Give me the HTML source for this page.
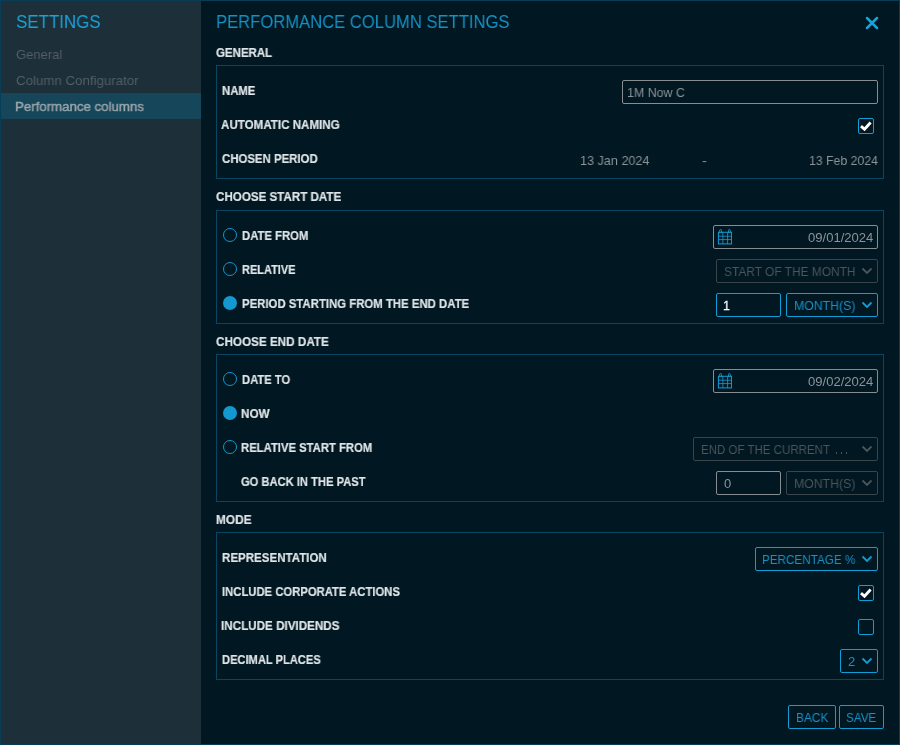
<!DOCTYPE html>
<html><head><meta charset="utf-8"><style>
html,body{margin:0;padding:0;width:900px;height:745px;overflow:hidden;background:#011721}
.t{position:absolute;will-change:transform;font-family:"Liberation Sans",sans-serif;white-space:nowrap;transform-origin:0 0}
.b{position:absolute}
</style></head><body>
<div style="position:absolute;left:0;top:0;width:898px;height:743px;border:1px solid #083e55;background:#011721"></div><div style="position:absolute;left:1px;top:1px;width:200px;height:743px;background:#1d2f38"></div><div style="position:absolute;left:1px;top:93px;width:200px;height:26px;background:#16465a"></div><div class="b" style="left:216px;top:65px;width:666px;height:112px;border:1px solid #094662;border-radius:0px;"></div><div class="b" style="left:216px;top:210px;width:666px;height:112px;border:1px solid #094662;border-radius:0px;"></div><div class="b" style="left:216px;top:354px;width:666px;height:146px;border:1px solid #094662;border-radius:0px;"></div><div class="b" style="left:216px;top:532px;width:666px;height:146px;border:1px solid #094662;border-radius:0px;"></div><div class="b" style="left:622px;top:80px;width:254px;height:22px;border:1px solid #878d90;border-radius:2px;"></div><div class="b" style="left:713px;top:225px;width:163px;height:22px;border:1px solid #878d90;border-radius:2px;"></div><div class="b" style="left:716px;top:259px;width:160px;height:22px;border:1px solid #3a454b;border-radius:2px;"></div><div class="b" style="left:716px;top:293px;width:63px;height:22px;border:1px solid #0f9ed6;border-radius:2px;"></div><div class="b" style="left:786px;top:293px;width:90px;height:22px;border:1px solid #0f9ed6;border-radius:2px;"></div><div class="b" style="left:713px;top:369px;width:163px;height:22px;border:1px solid #878d90;border-radius:2px;"></div><div class="b" style="left:693px;top:437px;width:183px;height:22px;border:1px solid #3a454b;border-radius:2px;"></div><div class="b" style="left:716px;top:471px;width:63px;height:22px;border:1px solid #878d90;border-radius:2px;"></div><div class="b" style="left:786px;top:471px;width:90px;height:22px;border:1px solid #3a454b;border-radius:2px;"></div><div class="b" style="left:755px;top:547px;width:121px;height:22px;border:1px solid #0f9ed6;border-radius:2px;"></div><div class="b" style="left:840px;top:649px;width:36px;height:22px;border:1px solid #0f9ed6;border-radius:2px;"></div><div class="b" style="left:788px;top:705px;width:46px;height:22px;border:1px solid #0f9ed6;border-radius:2px;"></div><div class="b" style="left:839px;top:705px;width:43px;height:22px;border:1px solid #0f9ed6;border-radius:2px;"></div><div class="b" style="left:835.5px;top:452px;width:1.8px;height:1.9px;background:#4b565b"></div><div class="b" style="left:840.5px;top:452px;width:1.8px;height:1.9px;background:#4b565b"></div><div class="b" style="left:845.5px;top:452px;width:1.8px;height:1.9px;background:#4b565b"></div><div class="b" style="left:858px;top:118px;width:14px;height:14px;border:1px solid #0f9ed6;border-radius:2px;"></div><div class="b" style="left:858px;top:585px;width:14px;height:14px;border:1px solid #0f9ed6;border-radius:2px;"></div><div class="b" style="left:858px;top:619px;width:14px;height:14px;border:1px solid #0f9ed6;border-radius:2px;"></div><div class="b" style="left:223px;top:228px;width:12px;height:12px;border-radius:50%;border:1px solid #1398d0"></div><div class="b" style="left:223px;top:262px;width:12px;height:12px;border-radius:50%;border:1px solid #1398d0"></div><div class="b" style="left:223px;top:296px;width:14px;height:14px;border-radius:50%;background:#1398d0"></div><div class="b" style="left:223px;top:372px;width:12px;height:12px;border-radius:50%;border:1px solid #1398d0"></div><div class="b" style="left:223px;top:406px;width:14px;height:14px;border-radius:50%;background:#1398d0"></div><div class="b" style="left:223px;top:440px;width:12px;height:12px;border-radius:50%;border:1px solid #1398d0"></div>
<svg class="b" style="left:860px;top:11px" width="24" height="24"><path d="M7 7 L17 17 M17 7 L7 17" stroke="#1aa3d9" stroke-width="2.5" stroke-linecap="round"/></svg><svg class="b" style="left:858px;top:118px" width="16" height="16"><path d="M3 8.1 L6.5 11.3 L12.6 4.5" stroke="#fff" stroke-width="2.8" fill="none" stroke-linecap="butt" stroke-linejoin="miter"/></svg><svg class="b" style="left:858px;top:585px" width="16" height="16"><path d="M3 8.1 L6.5 11.3 L12.6 4.5" stroke="#fff" stroke-width="2.8" fill="none" stroke-linecap="butt" stroke-linejoin="miter"/></svg><svg class="b" style="left:861px;top:266px" width="12" height="10"><path d="M1.5 2.5 L6 7 L10.5 2.5" stroke="#4b565b" stroke-width="1.8" fill="none"/></svg><svg class="b" style="left:861px;top:300px" width="12" height="10"><path d="M1.5 2.5 L6 7 L10.5 2.5" stroke="#0f9ed6" stroke-width="1.8" fill="none"/></svg><svg class="b" style="left:861px;top:444px" width="12" height="10"><path d="M1.5 2.5 L6 7 L10.5 2.5" stroke="#4b565b" stroke-width="1.8" fill="none"/></svg><svg class="b" style="left:861px;top:478px" width="12" height="10"><path d="M1.5 2.5 L6 7 L10.5 2.5" stroke="#4b565b" stroke-width="1.8" fill="none"/></svg><svg class="b" style="left:861px;top:554px" width="12" height="10"><path d="M1.5 2.5 L6 7 L10.5 2.5" stroke="#0f9ed6" stroke-width="1.8" fill="none"/></svg><svg class="b" style="left:861px;top:656px" width="12" height="10"><path d="M1.5 2.5 L6 7 L10.5 2.5" stroke="#0f9ed6" stroke-width="1.8" fill="none"/></svg><svg class="b" style="left:717px;top:228px" width="17" height="18"><g stroke="#1592c8" fill="none"><rect x="1.5" y="4.3" width="13" height="11.6" stroke-width="1.1"/><path d="M1.5 8.2 H14.5 M1.5 11.6 H14.5 M5.85 4.5 V16 M10.6 4.5 V16" stroke-width="0.9"/><path d="M2.7 5.2 V2.4 a0.9 0.9 0 0 1 1.8 0 V5.2 M11.5 5.2 V2.4 a0.9 0.9 0 0 1 1.8 0 V5.2" stroke-width="1"/></g></svg><svg class="b" style="left:717px;top:372px" width="17" height="18"><g stroke="#1592c8" fill="none"><rect x="1.5" y="4.3" width="13" height="11.6" stroke-width="1.1"/><path d="M1.5 8.2 H14.5 M1.5 11.6 H14.5 M5.85 4.5 V16 M10.6 4.5 V16" stroke-width="0.9"/><path d="M2.7 5.2 V2.4 a0.9 0.9 0 0 1 1.8 0 V5.2 M11.5 5.2 V2.4 a0.9 0.9 0 0 1 1.8 0 V5.2" stroke-width="1"/></g></svg>
<div class="t" style="left:15.52px;top:12.00px;font-weight:normal;font-size:19px;line-height:19px;color:#1aa3d9;transform:scaleX(0.8912);">SETTINGS</div><div class="t" style="left:15.59px;top:48.00px;font-weight:normal;font-size:13.5px;line-height:13.5px;color:#535f66;transform:scaleX(0.9644);">General</div><div class="t" style="left:16.16px;top:74.00px;font-weight:normal;font-size:13.5px;line-height:13.5px;color:#535f66;transform:scaleX(0.9849);">Column Configurator</div><div class="t" style="left:15.36px;top:100.00px;font-weight:normal;font-size:13.5px;line-height:13.5px;color:#9aa5aa;transform:scaleX(0.9819);-webkit-text-stroke:0.45px #9aa5aa">Performance columns</div><div class="t" style="left:216.03px;top:12.00px;font-weight:normal;font-size:19px;line-height:19px;color:#1592c4;transform:scaleX(0.8743);">PERFORMANCE COLUMN SETTINGS</div><div class="t" style="left:216.13px;top:46.00px;font-weight:bold;font-size:13px;line-height:13px;color:#dfe5e8;transform:scaleX(0.8827);-webkit-text-stroke:0.2px #dfe5e8">GENERAL</div><div class="t" style="left:222.24px;top:84.00px;font-weight:bold;font-size:13px;line-height:13px;color:#dfe5e8;transform:scaleX(0.8721);-webkit-text-stroke:0.2px #dfe5e8">NAME</div><div class="t" style="left:220.69px;top:118.00px;font-weight:bold;font-size:13px;line-height:13px;color:#dfe5e8;transform:scaleX(0.8915);-webkit-text-stroke:0.2px #dfe5e8">AUTOMATIC NAMING</div><div class="t" style="left:222.00px;top:152.00px;font-weight:bold;font-size:13px;line-height:13px;color:#dfe5e8;transform:scaleX(0.8771);-webkit-text-stroke:0.2px #dfe5e8">CHOSEN PERIOD</div><div class="t" style="left:626.55px;top:86.00px;font-weight:normal;font-size:13px;line-height:13px;color:#8c9499;transform:scaleX(0.9542);">1M Now C</div><div class="t" style="left:579.62px;top:154.00px;font-weight:normal;font-size:13px;line-height:13px;color:#8c9499;transform:scaleX(0.9720);">13 Jan 2024</div><div class="t" style="left:808.65px;top:154.00px;font-weight:normal;font-size:13px;line-height:13px;color:#8c9499;transform:scaleX(0.9455);">13 Feb 2024</div><div class="t" style="left:215.62px;top:190.00px;font-weight:bold;font-size:13px;line-height:13px;color:#dfe5e8;transform:scaleX(0.8918);-webkit-text-stroke:0.2px #dfe5e8">CHOOSE START DATE</div><div class="t" style="left:242.01px;top:229.00px;font-weight:bold;font-size:13px;line-height:13px;color:#dfe5e8;transform:scaleX(0.8699);-webkit-text-stroke:0.2px #dfe5e8">DATE FROM</div><div class="t" style="left:242.10px;top:263.00px;font-weight:bold;font-size:13px;line-height:13px;color:#dfe5e8;transform:scaleX(0.8444);-webkit-text-stroke:0.2px #dfe5e8">RELATIVE</div><div class="t" style="left:242.00px;top:297.00px;font-weight:bold;font-size:13px;line-height:13px;color:#dfe5e8;transform:scaleX(0.8753);-webkit-text-stroke:0.2px #dfe5e8">PERIOD STARTING FROM THE END DATE</div><div class="t" style="left:807.93px;top:231.00px;font-weight:normal;font-size:13px;line-height:13px;color:#8c9499;transform:scaleX(1.0041);">09/01/2024</div><div class="t" style="left:724.00px;top:265.00px;font-weight:normal;font-size:13px;line-height:13px;color:#4b565b;transform:scaleX(0.9168);">START OF THE MONTH</div><div class="t" style="left:723.25px;top:299.00px;font-weight:normal;font-size:13px;line-height:13px;color:#ffffff;transform:scaleX(0.9500);-webkit-text-stroke:0.3px #fff">1</div><div class="t" style="left:794.04px;top:299.00px;font-weight:normal;font-size:13px;line-height:13px;color:#1792c8;transform:scaleX(0.9441);">MONTH(S)</div><div class="t" style="left:216.42px;top:335.00px;font-weight:bold;font-size:13px;line-height:13px;color:#dfe5e8;transform:scaleX(0.8995);-webkit-text-stroke:0.2px #dfe5e8">CHOOSE END DATE</div><div class="t" style="left:241.73px;top:373.00px;font-weight:bold;font-size:13px;line-height:13px;color:#dfe5e8;transform:scaleX(0.8624);-webkit-text-stroke:0.2px #dfe5e8">DATE TO</div><div class="t" style="left:241.40px;top:407.00px;font-weight:bold;font-size:13px;line-height:13px;color:#dfe5e8;transform:scaleX(0.9005);-webkit-text-stroke:0.2px #dfe5e8">NOW</div><div class="t" style="left:241.25px;top:441.00px;font-weight:bold;font-size:13px;line-height:13px;color:#dfe5e8;transform:scaleX(0.8682);-webkit-text-stroke:0.2px #dfe5e8">RELATIVE START FROM</div><div class="t" style="left:241.00px;top:475.00px;font-weight:bold;font-size:13px;line-height:13px;color:#dfe5e8;transform:scaleX(0.8593);-webkit-text-stroke:0.2px #dfe5e8">GO BACK IN THE PAST</div><div class="t" style="left:808.08px;top:375.00px;font-weight:normal;font-size:13px;line-height:13px;color:#8c9499;transform:scaleX(1.0050);">09/02/2024</div><div class="t" style="left:700.71px;top:443.00px;font-weight:normal;font-size:13px;line-height:13px;color:#4b565b;transform:scaleX(0.8855);">END OF THE CURRENT</div><div class="t" style="left:724.00px;top:477.00px;font-weight:normal;font-size:13px;line-height:13px;color:#8c9499;transform:scaleX(0.9500);">0</div><div class="t" style="left:794.04px;top:477.00px;font-weight:normal;font-size:13px;line-height:13px;color:#4b565b;transform:scaleX(0.9441);">MONTH(S)</div><div class="t" style="left:216.20px;top:513.00px;font-weight:bold;font-size:13px;line-height:13px;color:#dfe5e8;transform:scaleX(0.9128);-webkit-text-stroke:0.2px #dfe5e8">MODE</div><div class="t" style="left:221.81px;top:551.00px;font-weight:bold;font-size:13px;line-height:13px;color:#dfe5e8;transform:scaleX(0.8878);-webkit-text-stroke:0.2px #dfe5e8">REPRESENTATION</div><div class="t" style="left:761.96px;top:553.00px;font-weight:normal;font-size:13px;line-height:13px;color:#1792c8;transform:scaleX(0.8987);">PERCENTAGE %</div><div class="t" style="left:222.20px;top:585.00px;font-weight:bold;font-size:13px;line-height:13px;color:#dfe5e8;transform:scaleX(0.8673);-webkit-text-stroke:0.2px #dfe5e8">INCLUDE CORPORATE ACTIONS</div><div class="t" style="left:221.41px;top:619.00px;font-weight:bold;font-size:13px;line-height:13px;color:#dfe5e8;transform:scaleX(0.8966);-webkit-text-stroke:0.2px #dfe5e8">INCLUDE DIVIDENDS</div><div class="t" style="left:222.00px;top:653.00px;font-weight:bold;font-size:13px;line-height:13px;color:#dfe5e8;transform:scaleX(0.8557);-webkit-text-stroke:0.2px #dfe5e8">DECIMAL PLACES</div><div class="t" style="left:848.00px;top:655.00px;font-weight:normal;font-size:13px;line-height:13px;color:#1792c8;transform:scaleX(0.9429);">2</div><div class="t" style="left:795.74px;top:711.00px;font-weight:normal;font-size:13px;line-height:13px;color:#1792c8;transform:scaleX(0.9153);">BACK</div><div class="t" style="left:845.97px;top:711.00px;font-weight:normal;font-size:13px;line-height:13px;color:#1792c8;transform:scaleX(0.8965);">SAVE</div><div class="t" style="left:702.48px;top:154.00px;font-weight:normal;font-size:13px;line-height:13px;color:#8c9499;transform:scaleX(1.1331);">-</div>
</body></html>
